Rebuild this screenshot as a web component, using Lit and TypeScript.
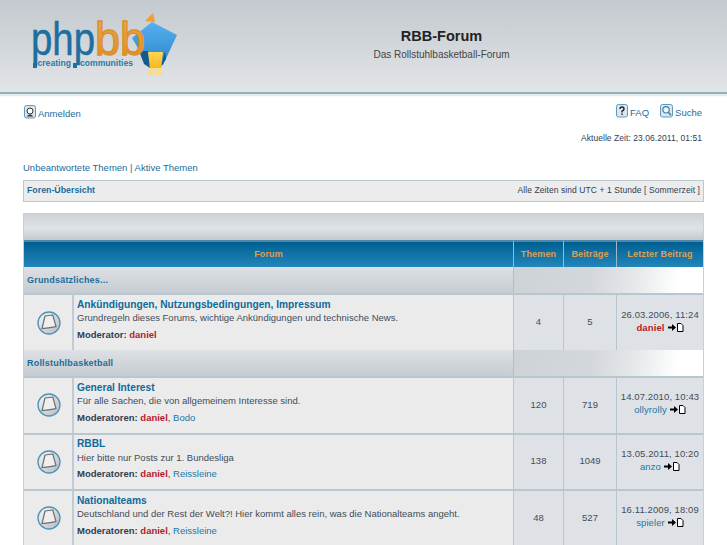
import { LitElement, html, css, svg } from "lit";
import { customElement } from "lit/decorators.js";

type Mod = { n: string; red?: boolean };
type Row = { title: string; desc: string; label: string; mods: Mod[]; t: string; b: string; date: string; user: string; red?: boolean };

const forumIcon = svg`<svg class="ficon" width="24" height="24" viewBox="0 0 24 24">
  <defs><linearGradient id="fg" x1="0" y1="0" x2="1" y2="1"><stop offset="0" stop-color="#f8f8f8"/><stop offset="1" stop-color="#b4bac0"/></linearGradient></defs>
  <circle cx="12" cy="12" r="11" fill="url(#fg)" stroke="#4d93b8" stroke-width="1.3"/>
  <path d="M8 5 L15.8 4 L19 15.6 Q11 17 5 17.6 Z" fill="#efefef" stroke="#6e6e6e" stroke-width="1.2" stroke-linejoin="round"/>
</svg>`;

const lastIcon = svg`<svg width="16" height="9" viewBox="0 0 16 9">
  <path d="M0 3.5H4V1L8 4.5L4 8V5.5H0Z" fill="#000"/>
  <path d="M9.5 .5H13L15 2.5V8.5H9.5Z" fill="#fff" stroke="#000"/>
</svg>`;

const logo = svg`<svg class="logo" width="158" height="70" viewBox="0 0 158 70">
  <defs>
    <linearGradient id="ob" x1="0" y1="0" x2="0" y2="1"><stop offset="0" stop-color="#e8ae58"/><stop offset="1" stop-color="#e08a1a"/></linearGradient>
    <linearGradient id="lb" x1="0" y1="0" x2="0" y2="1"><stop offset="0" stop-color="#55b0ee"/><stop offset="1" stop-color="#2f86cc"/></linearGradient>
    <linearGradient id="ly" x1="0" y1="0" x2="0" y2="1"><stop offset="0" stop-color="#fdd650"/><stop offset="1" stop-color="#f8b820"/></linearGradient>
  </defs>
  <path d="M118 8 L126 0 L128 9 Z" fill="#ee9f2e"/>
  <path d="M125 9 L150 22 L136 52 L121 52 L105 25 Z" fill="url(#lb)"/>
  <path d="M112 38 L121 38 L123 55 L117 51 Z" fill="#14598c"/>
  <path d="M138 38 L134 54 L139 46 Z" fill="#14598c"/>
  <path d="M121 39 H136 L134 55 H123 Z" fill="url(#ly)"/>
  <path d="M122 55 H134 L136 62 H120 Z" fill="#f5dc9a"/>
  <text x="4" y="42" textLength="64" lengthAdjust="spacingAndGlyphs" class="lg lp">php</text>
  <text x="68" y="42" textLength="50" lengthAdjust="spacingAndGlyphs" class="lg lb">bb</text>
  <rect x="6" y="50" width="4" height="5" fill="#1d6f9f"/>
  <rect x="46" y="50" width="4" height="5" fill="#1d6f9f"/>
  <text x="10.500" y="53" class="ls">creating</text>
  <text x="53" y="53" class="ls">communities</text>
</svg>`;

const loginIcon = svg`<svg width="12" height="14" viewBox="0 0 12 14"><rect x=".5" y=".5" width="11" height="12.5" rx="2" fill="#dbe6ee" stroke="#5b9bbd"/><circle cx="6" cy="6" r="3" fill="#fff" stroke="#333"/><path d="M2.5 11.5 Q6 7.5 9.5 11.5Z" fill="#333"/></svg>`;
const faqIcon = svg`<svg width="12" height="14" viewBox="0 0 12 14"><rect x=".5" y=".5" width="11" height="12.5" rx="2" fill="#dbe6ee" stroke="#5b9bbd"/><path d="M4 5Q4 3 6 3T8 5Q8 6.4 6 7.2V8.5M6 9.6V11" fill="none" stroke="#222" stroke-width="1.4"/></svg>`;
const searchIcon = svg`<svg width="13" height="14" viewBox="0 0 13 14"><rect x=".5" y=".5" width="12" height="12.5" rx="2" fill="#dbe6ee" stroke="#5b9bbd"/><circle cx="6" cy="5.8" r="3.2" fill="#f4f8fb" stroke="#3d7fa6" stroke-width="1.2"/><path d="M8.5 8.5L11 11.3" stroke="#3d7fa6" stroke-width="1.6"/></svg>`;

const sec1: Row[] = [
  { title: "Ankündigungen, Nutzungsbedingungen, Impressum", desc: "Grundregeln dieses Forums, wichtige Ankündigungen und technische News.", label: "Moderator:", mods: [{ n: "daniel", red: true }], t: "4", b: "5", date: "26.03.2006, 11:24", user: "daniel", red: true },
];
const sec2: Row[] = [
  { title: "General Interest", desc: "Für alle Sachen, die von allgemeinem Interesse sind.", label: "Moderatoren:", mods: [{ n: "daniel", red: true }, { n: "Bodo" }], t: "120", b: "719", date: "14.07.2010, 10:43", user: "ollyrolly" },
  { title: "RBBL", desc: "Hier bitte nur Posts zur 1. Bundesliga", label: "Moderatoren:", mods: [{ n: "daniel", red: true }, { n: "Reissleine" }], t: "138", b: "1049", date: "13.05.2011, 10:20", user: "anzo" },
  { title: "Nationalteams", desc: "Deutschland und der Rest der Welt?! Hier kommt alles rein, was die Nationalteams angeht.", label: "Moderatoren:", mods: [{ n: "daniel", red: true }, { n: "Reissleine" }], t: "48", b: "527", date: "16.11.2009, 18:09", user: "spieler" },
];

@customElement("app-root")
export class AppRoot extends LitElement {
  static styles = css`
    :host { display: block; width: 727px; height: 545px; overflow: hidden; background: #fff; font-family: "Liberation Sans", Arial, sans-serif; font-size: 9.5px; color: #323d4f; }
    .head { height: 92px; background: linear-gradient(#c3c9ce, #e2e5e8); border-bottom: 2px solid #8fb2c2; display: grid; grid-template-columns: 158px 1fr; padding-left: 27px; box-shadow: 0 2px 1px #e8e8e8; }
    .logo { margin-top: 13px; display: block; }
    .lg { font: 47px "Liberation Sans", sans-serif; }
    .lp { fill: #1d6f9f; stroke: #1d6f9f; stroke-width: .5px; }
    .lb { fill: url(#ob); stroke: #dc8f28; stroke-width: 1.4px; }
    .ls { font: bold 8.6px "Liberation Sans", sans-serif; fill: #2a7aa8; }
    .site { text-align: center; padding: 28px 29px 0 0; }
    .site h1 { margin: 0; font-size: 14.5px; line-height: 16px; font-weight: bold; color: #222; }
    .site p { margin: 5px 0 0; font-size: 10px; line-height: 12px; color: #444; }
    .nav { display: flex; justify-content: space-between; padding: 11px 25px 0 24px; height: 19px; }
    .nav .it { display: inline-flex; align-items: flex-end; gap: 2px; height: 14px; color: #1a6d9b; font-size: 9.5px; line-height: 11px; }
    .nav .r { display: flex; gap: 11px; margin-top: -1px; }
    .time { text-align: right; padding: 8px 25px 0 0; font-size: 8.5px; line-height: 12px; letter-spacing: .05px; height: 17px; }
    .links { padding: 13px 0 0 23px; font-size: 9.5px; line-height: 12px; color: #1a6d9b; height: 12px; }
    .crumb { margin: 6px 23px 0; height: 22px; box-sizing: border-box; border: 1px solid #bcc8d0; background: #ececec; display: flex; justify-content: space-between; align-items: center; padding: 0 3px 2px; font-size: 8.5px; letter-spacing: .08px; }
    .crumb b { color: #1a6d9b; letter-spacing: 0; font-size: 8.8px; }
    .tbl { margin: 11px 23px 0; border: 1px solid #c6d0d7; border-bottom: 0; display: grid; grid-template-columns: 50px 439px 50px 53px 1fr; }
    .top { grid-column: 1 / -1; height: 26px; background: linear-gradient(#cdd2d7, #e0e3e6 55%, #c3c9cf); }
    .th { height: 27px; padding-bottom: 2px; background: linear-gradient(#005f91, #2386bb); border-top: 2px solid #4f88a8; color: #dda050; font-weight: bold; font-size: 9px; letter-spacing: .15px; display: flex; align-items: center; justify-content: center; box-sizing: border-box; border-left: 1px solid #9db9c9; }
    .th.f { grid-column: 1 / 3; border-left: 0; }
    .cat { height: 26.25px; background: linear-gradient(#dde0e4, #c6ccd2); display: flex; align-items: center; padding-left: 3px; color: #1a6d9b; font-weight: bold; font-size: 9px; letter-spacing: .2px; grid-column: 1 / 3; box-sizing: border-box; }
    .catr { grid-column: 3 / -1; height: 26.25px; background: linear-gradient(100deg, #cdd2d7 0%, #d4d8dc 42%, #e8eaec 66%, #fff 86%); border-left: 1px solid #b0bec9; box-sizing: border-box; }
    .cell { height: 56.5px; box-sizing: border-box; border-top: 2px solid #b8c6d0; background: #ebebeb; }
    .ic { display: flex; align-items: center; justify-content: center; border-right: 2px solid #c0ccd5; padding-left: 1px; }
    .main { padding: 2.5px 0 0 3px; }
    .main h3 { margin: 0; font-size: 10.2px; line-height: 14px; color: #0e6a9b; }
    .main p { margin: .5px 0 0; font-size: 9.5px; line-height: 12px; color: #444c58; }
    .mod { margin-top: 4.5px; font-size: 9.5px; line-height: 12px; }
    .mod b { color: #323d4f; }
    .red { color: #b2222c; font-weight: bold; }
    .blue { color: #1a78a8; }
    .num { background: #dee2e6; border-left: 1px solid #b8c6d0; display: flex; align-items: center; justify-content: center; padding-bottom: 2px; font-size: 9.5px; color: #444c58; }
    .last { flex-direction: column; gap: 2px; text-align: center; letter-spacing: .1px; padding-bottom: 4px; }
    .last div { display: flex; align-items: center; gap: 3px; }
  `;

  private row(r: Row) {
    return html`
      <div class="cell ic">${forumIcon}</div>
      <div class="cell main">
        <h3>${r.title}</h3>
        <p>${r.desc}</p>
        <div class="mod"><b>${r.label}</b> ${r.mods.map((m, i) => html`${i ? ", " : ""}<span class=${m.red ? "red" : "blue"}>${m.n}</span>`)}</div>
      </div>
      <div class="cell num">${r.t}</div>
      <div class="cell num">${r.b}</div>
      <div class="cell num last"><span>${r.date}</span><div><span class=${r.red ? "red" : "blue"}>${r.user}</span>${lastIcon}</div></div>
    `;
  }

  render() {
    return html`
      <div class="head">
        ${logo}
        <div class="site"><h1>RBB-Forum</h1><p>Das Rollstuhlbasketball-Forum</p></div>
      </div>
      <div class="nav">
        <span class="it">${loginIcon} Anmelden</span>
        <div class="r"><span class="it">${faqIcon} FAQ</span><span class="it">${searchIcon} Suche</span></div>
      </div>
      <div class="time">Aktuelle Zeit: 23.06.2011, 01:51</div>
      <div class="links">Unbeantwortete Themen | Aktive Themen</div>
      <div class="crumb"><b>Foren-Übersicht</b><span>Alle Zeiten sind UTC + 1 Stunde [ Sommerzeit ]</span></div>
      <div class="tbl">
        <div class="top"></div>
        <div class="th f">Forum</div><div class="th">Themen</div><div class="th">Beiträge</div><div class="th">Letzter Beitrag</div>
        <div class="cat">Grundsätzliches...</div><div class="catr"></div>
        ${sec1.map((r) => this.row(r))}
        <div class="cat">Rollstuhlbasketball</div><div class="catr"></div>
        ${sec2.map((r) => this.row(r))}
      </div>
    `;
  }
}
